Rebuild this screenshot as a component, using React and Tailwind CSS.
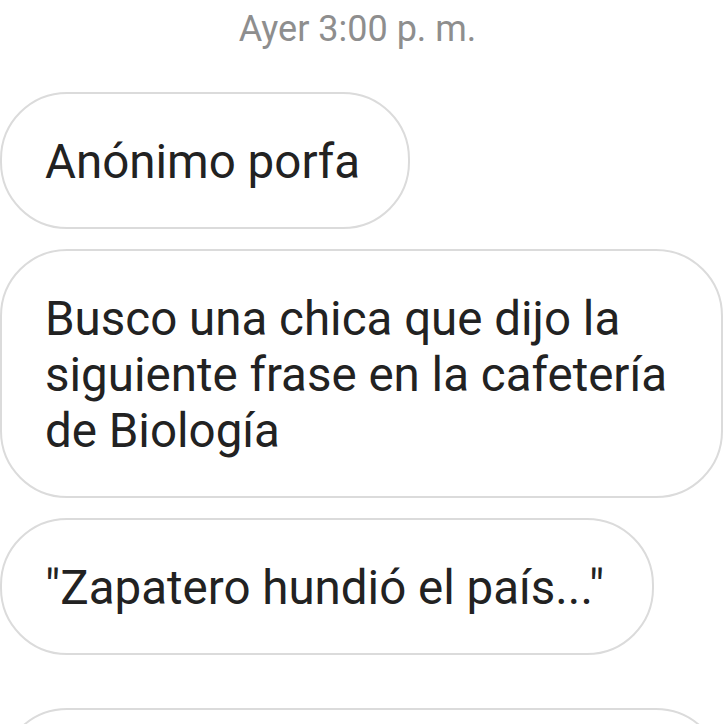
const messages = [
  { id: 1, text: 'Anónimo porfa' },
  { id: 2, text: 'Busco una chica que dijo la siguiente frase en la cafetería de Biología' },
  { id: 3, text: '"Zapatero hundió el país..."' },
]

function Bubble({ children, className = '' }) {
  return (
    <div
      className={`inline-block max-w-[723px] rounded-[67px] border-2 border-[#dbdbdb] bg-white pl-[43px] pr-[48px] pt-[40px] pb-[37px] text-[47.5px] leading-[56px] text-[#222222] ${className}`}
    >
      {children}
    </div>
  )
}

export default function App() {
  return (
    <div className="h-[724px] w-[723px] overflow-hidden bg-white font-['Roboto','Noto_Sans',sans-serif]">
      <p className="pt-[8px] pr-[8px] text-center text-[36px] leading-[42px] text-[#8e8e8e]">
        Ayer 3:00 p. m.
      </p>

      <div className="mt-[42px] flex flex-col items-start gap-[20px]">
        {messages.map(m => (
          <Bubble key={m.id}>{m.text}</Bubble>
        ))}
        {/* next message, cut off by the bottom edge */}
        <div className="mt-[33px] h-[136px] w-[723px] rounded-[67px] border-2 border-[#dbdbdb] bg-white" />
      </div>
    </div>
  )
}
